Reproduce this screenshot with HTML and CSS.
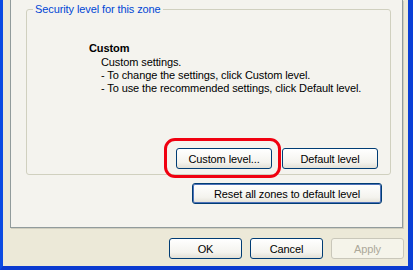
FILE: index.html
```html
<!DOCTYPE html>
<html lang="en">
<head>
  <meta charset="UTF-8" />
  <title>Internet Options – Security</title>
  <link rel="stylesheet" href="styles.css">
</head>
<body>

<!-- Dialog window frame -->
<div class="window">
  <div class="client">

    <!-- Security tab page -->
    <div class="tabpanel">
      <fieldset class="group">
        <legend>Security level for this zone</legend>

        <div class="level">
          <div class="level-name">Custom</div>
          <div class="level-desc">
            <div>Custom settings.</div>
            <div>- To change the settings, click Custom level.</div>
            <div>- To use the recommended settings, click Default level.</div>
          </div>
        </div>

        <div class="group-actions">
          <span class="highlight"><button class="btn btn-level">Custom level...</button></span>
          <button class="btn btn-level">Default level</button>
        </div>
      </fieldset>

      <div class="panel-actions">
        <button class="btn btn-default btn-reset">Reset all zones to default level</button>
      </div>
    </div>

    <!-- OK / Cancel / Apply -->
    <div class="dialog-actions">
      <button class="btn">OK</button>
      <button class="btn">Cancel</button>
      <button class="btn" disabled>Apply</button>
    </div>

  </div>
</div>

</body>
</html>
```

FILE: styles.css
```css
/* Window frame */
body {
  margin: 0;
  font-family: "Liberation Sans", Arial, sans-serif;
  font-size: 11px;
  letter-spacing: -0.1px;
  background: #ece9d8;
}

.window {
  width: 413px;
  height: 270px;
  box-sizing: border-box;
  border-left: 3px solid #0b4be2;
  border-right: 5px solid #0a3fd6;
  border-bottom: 4px solid #0a3ad0;
  background: #ece9d8;
}

.client {
  padding: 0 1px 0 7px;
}

/* Tab page */
.tabpanel {
  width: 393px;
  height: 228px;
  box-sizing: border-box;
  border: 1px solid #919b9c;
  border-top: none;
  background: #f4f3ee;
  padding: 3px 11px 0 15px;
  box-shadow: 1px 1px 0 #d0cebf;
}

.group {
  margin: 0;
  padding: 0 0 5px 0;
  border: 1px solid #d0d0bf;
  border-radius: 3px;
  min-width: 0;
}

.group legend {
  margin-left: 6px;
  padding: 0 2px;
  line-height: 13px;
  color: #0046d5;
}

.level {
  padding: 26px 0 0 62px;
  line-height: 13px;
  color: #000;
}

.level-name {
  font-weight: bold;
  margin-bottom: 1px;
}

.level-desc {
  padding-left: 12px;
}

.group-actions {
  display: flex;
  justify-content: flex-end;
  gap: 10px;
  margin-top: 53px;
  padding-right: 12px;
}

/* Red call-out ring */
.highlight {
  position: relative;
  display: inline-flex;
}

.highlight::after {
  content: "";
  position: absolute;
  top: -10px;
  right: -9px;
  bottom: -9px;
  left: -12px;
  border: 3px solid #f00010;
  border-radius: 11px;
  pointer-events: none;
}

.panel-actions {
  display: flex;
  justify-content: flex-end;
  margin-top: 8px;
  padding-right: 9px;
}

/* XP buttons */
.btn {
  width: 73px;
  height: 21px;
  padding: 0;
  font-family: inherit;
  font-size: 11px;
  letter-spacing: -0.1px;
  color: #000;
  border: 1px solid #003c74;
  border-radius: 3px;
  background: linear-gradient(#ffffff, #f4f3ee 70%, #e3e0d6);
}

.btn-level {
  width: 96px;
}

.btn-reset {
  width: 190px;
}

.btn-default {
  box-shadow: inset 0 0 0 1px #4d71b8;
}

.btn:disabled {
  color: #aca899;
  border-color: #c9c7ba;
  background: #f5f4ea;
}

.dialog-actions {
  display: flex;
  justify-content: flex-end;
  gap: 8px;
  margin-top: 10px;
  padding-right: 3px;
}
```
